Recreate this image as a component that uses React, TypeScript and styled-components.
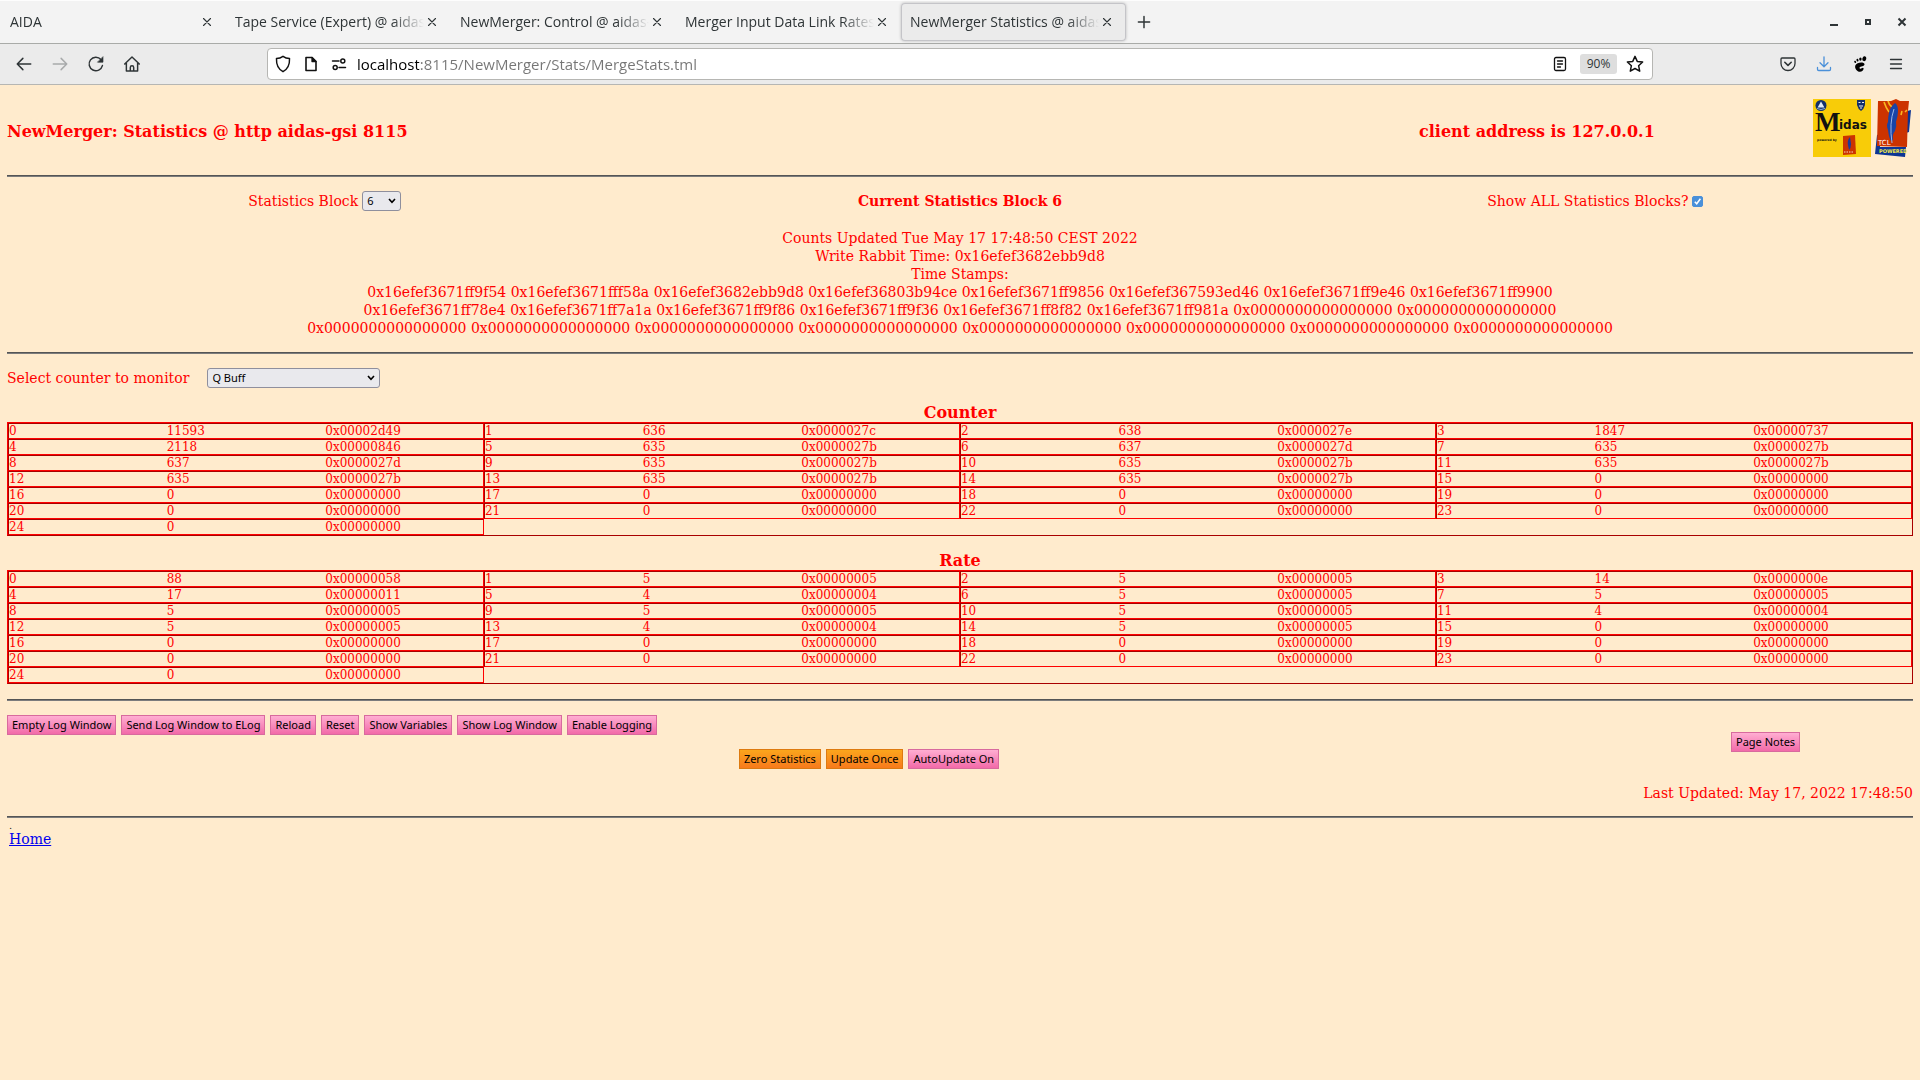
import React, { useState } from "react";
import styled, { createGlobalStyle, css } from "styled-components";

const uiFont = `"Open Sans", "Noto Sans", sans-serif`;
const controlFont = `"Noto Sans", "Open Sans", sans-serif`;
const pageFont = `"DejaVu Serif", "Liberation Serif", serif`;

const GlobalStyle = createGlobalStyle`
  *, *::before, *::after { box-sizing: border-box; }
  body {
    margin: 0;
    min-height: 100vh;
    background: #ffebcd;
    color: #ff0000;
    font-family: ${pageFont};
    font-size: 14px;
    line-height: 18px;
  }
`;

/* ---------- browser window ---------- */

const TabStrip = styled.header`
  display: flex;
  align-items: center;
  height: 44px;
  padding: 0 1px;
  background: #f3f3f3;
  border-top: 1px solid #fdfdfd;
  border-bottom: 1px solid #a9aba8;
`;

const TabList = styled.div`
  display: flex;
`;

const TabItem = styled.div<{ $active?: boolean }>`
  display: flex;
  align-items: center;
  width: 225px;
  height: 38px;
  padding: 0 11px 0 9px;
  border-radius: 4px;
  ${(p) =>
    p.$active &&
    css`
      background: #ebebeb;
      box-shadow: inset 0 0 0 1px #c4c4c8, 0 0 3px rgba(0, 0, 0, 0.25);
    `}
`;

const TabTitle = styled.button`
  flex: 1;
  min-width: 0;
  overflow: hidden;
  padding: 0;
  border: 0;
  background: none;
  color: #2e3436;
  font: 14px/20px ${uiFont};
  text-align: left;
  white-space: nowrap;
  mask-image: linear-gradient(to left, transparent, #000 32px);
`;

const IconButton = styled.button<{ $size?: number; $color?: string }>`
  display: grid;
  place-items: center;
  flex: none;
  width: ${(p) => p.$size ?? 36}px;
  height: ${(p) => p.$size ?? 36}px;
  padding: 0;
  border: 0;
  background: none;
  color: ${(p) => p.$color ?? "#2e3436"};
`;

const WindowControls = styled.div`
  display: flex;
  margin-left: auto;
`;

const Toolbar = styled.nav`
  display: flex;
  align-items: center;
  justify-content: space-between;
  height: 41px;
  padding: 0 6px;
  background: #ebebeb;
  border-bottom: 1px solid #b6b6b3;
`;

const ToolGroup = styled.div<{ $end?: boolean }>`
  display: flex;
  justify-content: ${(p) => (p.$end ? "flex-end" : "flex-start")};
  flex: 1;
`;

const AddressBar = styled.div`
  display: flex;
  align-items: center;
  flex: 0 1 1386px;
  height: 32px;
  padding: 0 1px;
  background: #fff;
  border: 1px solid #b6b6b3;
  border-radius: 4px;
`;

const AddressInput = styled.input`
  flex: 1;
  min-width: 0;
  height: 28px;
  padding: 0;
  margin-left: 4px;
  border: 0;
  outline: 0;
  color: #000;
  font: 15px/28px ${uiFont};
  background: linear-gradient(to right, #000 62px, #757575 62px);
  background-clip: text;
  -webkit-text-fill-color: transparent;
`;

const ZoomLevel = styled.button`
  width: 37px;
  height: 20px;
  margin: 0 2px 0 6px;
  padding: 0;
  border: 0;
  border-radius: 3px;
  background: #dedede;
  color: #2e3436;
  font: 12px/20px ${uiFont};
`;

const Svg = ({ size = 18, children }: { size?: number; children: React.ReactNode }) => (
  <svg
    width={size}
    height={size}
    viewBox="0 0 16 16"
    fill="none"
    stroke="currentColor"
    strokeWidth="1.3"
    strokeLinecap="round"
    strokeLinejoin="round"
    aria-hidden="true"
  >
    {children}
  </svg>
);

const CloseIcon = () => (
  <Svg size={16}>
    <path d="M4.5 4.5l7 7M11.5 4.5l-7 7" strokeWidth="1.1" />
  </Svg>
);

/* ---------- page ---------- */

const Page = styled.main`
  padding: 0 7px;
`;

const Rule = styled.hr`
  height: 2px;
  margin: 0;
  border: 0;
  border-top: 1px solid #555555;
  border-bottom: 1px solid #7c7c7c;
`;

const PageHeader = styled.div`
  display: grid;
  grid-template-columns: 1fr 394px 100px;
  align-items: center;
  padding: 14px 0 17px;
`;

const Heading = styled.h3<{ $center?: boolean }>`
  margin: 0;
  padding-top: ${(p) => (p.$center ? 2 : 5)}px;
  font-size: 16px;
  line-height: 19px;
  font-weight: bold;
  text-align: ${(p) => (p.$center ? "center" : "left")};
`;

const Logos = styled.div`
  display: flex;
  gap: 4px;
`;

const LogoLink = styled.a`
  display: block;
  height: 59px;
`;

const BlockRow = styled.div`
  display: grid;
  grid-template-columns: repeat(3, 1fr);
  align-items: center;
  justify-items: center;
  padding: 14px 0 18px;
`;

const Field = styled.label<{ $gap?: number }>`
  display: flex;
  align-items: center;
  gap: ${(p) => p.$gap ?? 4}px;
  width: fit-content;
`;

const Select = styled.select<{ $width: number }>`
  appearance: none;
  width: ${(p) => p.$width}px;
  height: 20px;
  padding: 0 16px 0 4px;
  border: 1px solid #8f8f9d;
  border-radius: 3px;
  background: #e9e9ed
    url("data:image/svg+xml,%3Csvg xmlns='http://www.w3.org/2000/svg' width='8' height='6'%3E%3Cpath d='M1 1l3 3.4L7 1' fill='none' stroke='black' stroke-width='1.6'/%3E%3C/svg%3E")
    no-repeat right 4px center;
  color: #000;
  font: 11px/18px ${controlFont};
`;

const Checkbox = styled.input`
  appearance: none;
  width: 11px;
  height: 11px;
  margin: 0;
  border: 1px solid #4a90d9;
  border-radius: 2px;
  background: #fff;
  &:checked {
    background: #4a90d9
      url("data:image/svg+xml,%3Csvg xmlns='http://www.w3.org/2000/svg' width='9' height='9'%3E%3Cpath d='M1.8 4.8l1.9 2L7.4 1.8' fill='none' stroke='white' stroke-width='1.5'/%3E%3C/svg%3E")
      center no-repeat;
  }
`;

const Stamps = styled.p`
  margin: 0 0 15px;
  text-align: center;
`;

const MonitorRow = styled.div`
  padding: 14px 0 13px;
`;

const Section = styled.section`
  padding-bottom: 13px;
  & + & {
    padding-bottom: 15px;
  }
`;

const TableFrame = styled.div`
  border: 1px solid;
  border-color: #ff0000 #a80000 #a80000 #ff0000;
`;

const DataTable = styled.table`
  width: 100%;
  border-spacing: 0;
  table-layout: fixed;
  font-size: 12px;
  line-height: 14px;
`;

const Cell = styled.td<{ $part: number }>`
  height: 16px;
  padding: 0;
  border: 0 solid;
  border-color: #a80000 #ff0000 #ff0000 #a80000;
  border-width: 1px ${(p) => (p.$part === 2 ? 1 : 0)}px 1px ${(p) => (p.$part === 0 ? 1 : 0)}px;
  text-align: left;
`;

const Actions = styled.div`
  display: grid;
  grid-template-columns: 1fr 182px;
  align-items: center;
  padding: 14px 0 15px;
`;

const ActionStack = styled.div`
  display: flex;
  flex-direction: column;
  gap: 14px;
`;

const ButtonRow = styled.div<{ $center?: boolean }>`
  display: flex;
  gap: 5px;
  justify-content: ${(p) => (p.$center ? "center" : "flex-start")};
`;

const ActionButton = styled.button<{ $tone?: "orange" }>`
  width: fit-content;
  height: 20px;
  padding: 0 4px;
  border: 1px solid ${(p) => (p.$tone ? "#dd7a10" : "#d86a9e")};
  background: ${(p) =>
    p.$tone ? "linear-gradient(#fba61c, #f77a1c)" : "linear-gradient(#ffaed2, #f26aa8)"};
  color: #000;
  font: 11px/18px ${controlFont};
  white-space: nowrap;
`;

const Updated = styled.div`
  padding-bottom: 14px;
  text-align: right;
`;

const Footer = styled.footer`
  padding: 4px 2px;
`;

const Dot = styled.div`
  color: #222;
  font-size: 10px;
  line-height: 8px;
`;

const HomeLink = styled.a`
  color: #0000ee;
`;

/* ---------- data ---------- */

const tabs = [
  "AIDA",
  "Tape Service (Expert) @ aidas",
  "NewMerger: Control @ aidas-",
  "Merger Input Data Link Rates",
  "NewMerger Statistics @ aidas",
];

const stamps = [
  "0x16efef3671ff9f54 0x16efef3671fff58a 0x16efef3682ebb9d8 0x16efef36803b94ce 0x16efef3671ff9856 0x16efef367593ed46 0x16efef3671ff9e46 0x16efef3671ff9900",
  "0x16efef3671ff78e4 0x16efef3671ff7a1a 0x16efef3671ff9f86 0x16efef3671ff9f36 0x16efef3671ff8f82 0x16efef3671ff981a 0x0000000000000000 0x0000000000000000",
  Array(8).fill("0x0000000000000000").join(" "),
];

const pad = (values: number[]) => [...values, ...Array(25 - values.length).fill(0)];

const counters = pad([11593, 636, 638, 1847, 2118, 635, 637, 635, 637, 635, 635, 635, 635, 635, 635]);
const rates = pad([88, 5, 5, 14, 17, 4, 5, 5, 5, 5, 5, 4, 5, 4, 5]);

const hex = (n: number) => "0x" + n.toString(16).padStart(8, "0");

function StatsTable({ title, values }: { title: string; values: number[] }) {
  const rows = Array.from({ length: Math.ceil(values.length / 4) }, (_, r) =>
    values.slice(r * 4, r * 4 + 4)
  );
  return (
    <Section>
      <Heading $center>{title}</Heading>
      <TableFrame>
        <DataTable aria-label={title}>
          <colgroup>
            {Array.from({ length: 12 }, (_, i) => (
              <col key={i} />
            ))}
          </colgroup>
          <tbody>
            {rows.map((row, r) => (
              <tr key={r}>
                {row.map((value, c) => (
                  <React.Fragment key={c}>
                    <Cell $part={0}>{r * 4 + c}</Cell>
                    <Cell $part={1}>{value}</Cell>
                    <Cell $part={2}>{hex(value)}</Cell>
                  </React.Fragment>
                ))}
              </tr>
            ))}
          </tbody>
        </DataTable>
      </TableFrame>
    </Section>
  );
}

const MidasLogo = () => (
  <svg width="58" height="59" viewBox="0 0 58 59" role="img" aria-label="Midas">
    <rect width="58" height="58" fill="#f8cc08" />
    <circle cx="8" cy="6.5" r="5.5" fill="#12306c" />
    <path d="M8 2.5l3.4 6H4.6z" fill="#dfe9f5" />
    <path d="M4 9.5q4 2 8 0" stroke="#8fb0d8" fill="none" />
    <path d="M44 1h8v5q-1 4-4 6-3-2-4-6z" fill="#12306c" />
    <path d="M45.5 3.5h2M49 3.5h2M46 7h4M47 9h2" stroke="#e9eef6" strokeWidth="1.2" />
    <text x="2" y="32" fontFamily="Liberation Serif, serif" fontWeight="bold" fontSize="27" fill="#111">M</text>
    <text x="26" y="30" fontFamily="DejaVu Sans, sans-serif" fontWeight="bold" fontSize="12" fill="#111">idas</text>
    <text x="4" y="42" fontFamily="DejaVu Sans, sans-serif" fontWeight="bold" fontSize="3" fill="#111">powered by</text>
    <path d="M30 37l12-1 1 19-13 1z" fill="#cc3300" />
    <path d="M37 38q-3 3-2 8l1 5q2-2 2-6z" fill="#1a3a9c" />
    <path d="M31 53h10" stroke="#f4d9c4" strokeDasharray="1.5 1" />
  </svg>
);

const TclLogo = () => (
  <svg width="36" height="59" viewBox="0 0 36 59" role="img" aria-label="Tcl Powered">
    <path d="M32 12l4-1-2 22-3 1z" fill="#0c3494" />
    <path d="M2 36l3-1 0 13 26 0-1 10-30-3z" fill="#0c3494" />
    <path d="M3 2l13 0 5-2 4 2 9 0-1 10-1 36-30-1z" fill="#cc3300" />
    <path d="M9 3q2 6 5 10M13 2q1 4 4 6M26 16l1-4M30 13l2-2" stroke="#f8b820" strokeWidth="1.6" fill="none" />
    <path d="M20 4q-5 4-6 10-1 4-1 9-2 3 0 8 1 8 3 11l2-1q-1-6 2-9 2-5 1-9 2-6 2-11 0-6-3-8z" fill="#1744a8" />
    <path d="M19 10q-5 14-2 34" stroke="#9db7e6" strokeWidth="1" fill="none" />
    <text x="3" y="46" fontFamily="DejaVu Sans, sans-serif" fontSize="7" fill="#fff">TCL</text>
    <text x="4" y="54" fontFamily="DejaVu Sans, sans-serif" fontWeight="bold" fontSize="5" fill="#f2e84a">POWERED</text>
  </svg>
);

export default function App() {
  const [showAll, setShowAll] = useState(true);
  return (
    <>
      <GlobalStyle />
      <TabStrip>
        <TabList role="tablist">
          {tabs.map((title, i) => (
            <TabItem key={title} $active={i === tabs.length - 1}>
              <TabTitle role="tab" aria-selected={i === tabs.length - 1}>
                {title}
              </TabTitle>
              <IconButton $size={16} aria-label="Close tab">
                <CloseIcon />
              </IconButton>
            </TabItem>
          ))}
        </TabList>
        <IconButton aria-label="New tab">
          <Svg>
            <path d="M8 3v10M3 8h10" />
          </Svg>
        </IconButton>
        <WindowControls>
          <IconButton $size={34} aria-label="Minimize">
            <Svg size={16}>
              <path d="M4 11h8" strokeWidth="2" strokeLinecap="butt" />
            </Svg>
          </IconButton>
          <IconButton $size={34} aria-label="Maximize">
            <Svg size={16}>
              <path d="M6 6h4v4H6z" strokeWidth="2" strokeLinejoin="miter" />
            </Svg>
          </IconButton>
          <IconButton $size={34} aria-label="Close window">
            <Svg size={16}>
              <path d="M4.5 4.5l7 7M11.5 4.5l-7 7" strokeWidth="2" strokeLinecap="butt" />
            </Svg>
          </IconButton>
        </WindowControls>
      </TabStrip>

      <Toolbar>
        <ToolGroup>
          <IconButton aria-label="Back">
            <Svg>
              <path d="M14 8H2M7 3L2 8l5 5" />
            </Svg>
          </IconButton>
          <IconButton $color="#a8aaab" aria-label="Forward">
            <Svg>
              <path d="M2 8h12M9 3l5 5-5 5" />
            </Svg>
          </IconButton>
          <IconButton aria-label="Reload">
            <Svg>
              <path d="M13.7 9.4A6 6 0 1 1 12.4 4" />
              <path d="M14.2 1.8v4.6H9.6z" fill="currentColor" strokeWidth="0.6" />
            </Svg>
          </IconButton>
          <IconButton aria-label="Home">
            <Svg>
              <path d="M1.5 8L8 1.8 14.5 8M3 7v7.2h10V7M6.5 14v-3a1.5 1.5 0 0 1 3 0v3" />
            </Svg>
          </IconButton>
        </ToolGroup>

        <AddressBar>
          <IconButton $size={28} $color="#111" aria-label="Tracking protection">
            <Svg>
              <path d="M8 1.2c1.8 1.3 3.9 1.9 5.8 2C14 8 12.3 12.5 8 14.8 3.7 12.5 2 8 2.2 3.2c1.9-.1 4-.7 5.8-2z" />
            </Svg>
          </IconButton>
          <IconButton $size={28} $color="#111" aria-label="Site information">
            <Svg size={16}>
              <path d="M3 1.5h6L13 5.5v9H3z" strokeWidth="1.6" />
              <path d="M9 1.5v4h4z" fill="currentColor" />
            </Svg>
          </IconButton>
          <IconButton $size={28} $color="#111" aria-label="Permissions">
            <Svg size={16}>
              <path d="M1.5 5h6.5M8 11.5h6.5" strokeWidth="1.5" />
              <circle cx="11.8" cy="5" r="2" strokeWidth="1.5" />
              <circle cx="4.2" cy="11.5" r="2" strokeWidth="1.5" />
            </Svg>
          </IconButton>
          <AddressInput
            aria-label="Address"
            defaultValue="localhost:8115/NewMerger/Stats/MergeStats.tml"
          />
          <IconButton $size={28} $color="#111" aria-label="Reader view">
            <Svg size={16}>
              <rect x="2.5" y="1.5" width="11" height="13" rx="1.5" />
              <path d="M5.5 5h5M5.5 8h5M5.5 11h3" />
            </Svg>
          </IconButton>
          <ZoomLevel>90%</ZoomLevel>
          <IconButton $size={32} $color="#111" aria-label="Bookmark">
            <Svg>
              <path d="M8 1.2l2 4.5 4.8.5-3.6 3.3 1 4.9L8 12l-4.2 2.400 1-4.900L1.200 6.200 6 5.700z" />
            </Svg>
          </IconButton>
        </AddressBar>

        <ToolGroup $end>
          <IconButton aria-label="Pocket">
            <Svg size={16}>
              <path d="M2 2h12a1 1 0 0 1 1 1v4.5a7 7 0 0 1-14 0V3a1 1 0 0 1 1-1z" />
              <path d="M4.8 6.3L8 9.4l3.2-3.1" strokeWidth="1.6" />
            </Svg>
          </IconButton>
          <IconButton $color="#4a90d9" aria-label="Downloads">
            <Svg size={16}>
              <path d="M8 .8v9.7M4 6.8l4 4 4-4M1.5 11.5v1.8q0 1.2 1.2 1.2h10.6q1.2 0 1.2-1.2v-1.8" />
            </Svg>
          </IconButton>
          <IconButton $color="#000" aria-label="GNOME extensions">
            <Svg size={16}>
              <g fill="currentColor" stroke="none">
                <ellipse cx="12.3" cy="2.7" rx="1.9" ry="2.5" transform="rotate(15 12.3 2.7)" />
                <ellipse cx="8.4" cy="3.1" rx="1.2" ry="1.7" />
                <ellipse cx="5.5" cy="4.2" rx="1" ry="1.4" transform="rotate(-15 5.5 4.2)" />
                <ellipse cx="3.2" cy="5.9" rx=".9" ry="1.2" transform="rotate(-25 3.2 5.9)" />
                <path d="M12.5 8.2C12.4 5.5 4.5 6 3.3 9.5 2.4 12.5 5 15.8 8 15.8c2 0 3.6-1.5 3.6-3.2 0-1.2-1.2-1-2-.3-.9.9-2.4.3-2-.9.6-1.4 5-.8 4.9-3.2z" />
              </g>
            </Svg>
          </IconButton>
          <IconButton aria-label="Menu">
            <Svg size={16}>
              <path d="M2.5 3.5h11M2.5 8h11M2.5 12.5h11" />
            </Svg>
          </IconButton>
        </ToolGroup>
      </Toolbar>

      <Page>
        <PageHeader>
          <Heading>NewMerger: Statistics @ http aidas-gsi 8115</Heading>
          <Heading>client address is 127.0.0.1</Heading>
          <Logos>
            <LogoLink href="#midas">
              <MidasLogo />
            </LogoLink>
            <LogoLink href="#tcl">
              <TclLogo />
            </LogoLink>
          </Logos>
        </PageHeader>
        <Rule />

        <BlockRow>
          <Field>
            Statistics Block
            <Select $width={39} defaultValue="6">
              <option>6</option>
            </Select>
          </Field>
          <strong>Current Statistics Block 6</strong>
          <Field>
            Show ALL Statistics Blocks?
            <Checkbox
              type="checkbox"
              checked={showAll}
              onChange={(e) => setShowAll(e.target.checked)}
            />
          </Field>
        </BlockRow>

        <Stamps>
          Counts Updated Tue May 17 17:48:50 CEST 2022
          <br />
          Write Rabbit Time: 0x16efef3682ebb9d8
          <br />
          Time Stamps:
          {stamps.map((line) => (
            <React.Fragment key={line}>
              <br />
              {line}
            </React.Fragment>
          ))}
        </Stamps>
        <Rule />

        <MonitorRow>
          <Field $gap={18}>
            Select counter to monitor
            <Select $width={173} defaultValue="Q Buff">
              <option>Q Buff</option>
            </Select>
          </Field>
        </MonitorRow>

        <StatsTable title="Counter" values={counters} />
        <StatsTable title="Rate" values={rates} />
        <Rule />

        <Actions>
          <ActionStack>
            <ButtonRow>
              <ActionButton>Empty Log Window</ActionButton>
              <ActionButton>Send Log Window to ELog</ActionButton>
              <ActionButton>Reload</ActionButton>
              <ActionButton>Reset</ActionButton>
              <ActionButton>Show Variables</ActionButton>
              <ActionButton>Show Log Window</ActionButton>
              <ActionButton>Enable Logging</ActionButton>
            </ButtonRow>
            <ButtonRow $center>
              <ActionButton $tone="orange">Zero Statistics</ActionButton>
              <ActionButton $tone="orange">Update Once</ActionButton>
              <ActionButton>AutoUpdate On</ActionButton>
            </ButtonRow>
          </ActionStack>
          <ActionButton>Page Notes</ActionButton>
        </Actions>
        <Updated>Last Updated: May 17, 2022 17:48:50</Updated>
        <Rule />

        <Footer>
          <Dot>.</Dot>
          <HomeLink href="#home">Home</HomeLink>
        </Footer>
      </Page>
    </>
  );
}
